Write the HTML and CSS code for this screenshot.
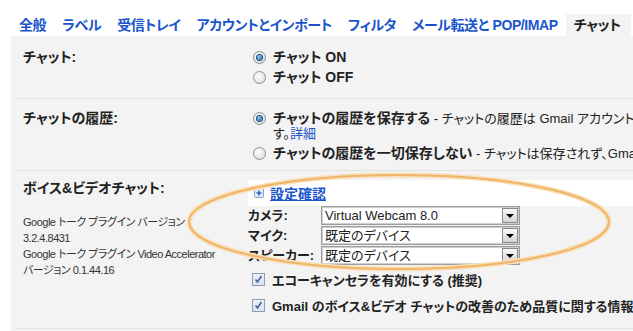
FILE: index.html
```html
<!DOCTYPE html>
<html>
<head>
  <meta charset="utf-8">
  <title>設定 - チャット</title>
  <link rel="stylesheet" href="styles.css">
</head>
<body>
  <div class="page">
    <div class="tabs">
      <a class="tab" href="#">全般</a>
      <a class="tab" href="#">ラベル</a>
      <a class="tab" href="#">受信トレイ</a>
      <a class="tab" href="#">アカウントとインポート</a>
      <a class="tab" href="#">フィルタ</a>
      <a class="tab" href="#">メール転送と POP/IMAP</a>
      <span class="tab active">チャット</span>
      <a class="tab" href="#">ウェブクリップ</a>
    </div>

    <div class="panel">
      <div class="row row-status">
        <div class="label">チャット:</div>
        <div class="field">
          <div class="option"><span class="radio on"></span><b>チャット ON</b></div>
          <div class="option"><span class="radio"></span><b>チャット OFF</b></div>
        </div>
      </div>

      <div class="row row-history">
        <div class="label">チャットの履歴:</div>
        <div class="field">
          <div class="option">
            <span class="radio on"></span>
            <span><b>チャットの履歴を保存する</b> - チャットの履歴は Gmail アカウントに保存されま<br>す。<a class="link" href="#">詳細</a></span>
          </div>
          <div class="option">
            <span class="radio"></span>
            <span><b>チャットの履歴を一切保存しない</b> - チャットは保存されず、Gmail のチャットの履歴にも表示されません。</span>
          </div>
        </div>
      </div>

      <div class="row row-voice">
        <div class="label">
          <div class="voice-title">ボイス&amp;ビデオチャット:</div>
          <p class="plugin">Google トーク プラグイン バージョン<br>3.2.4.8431</p>
          <p class="plugin">Google トーク プラグイン Video Accelerator<br>バージョン 0.1.44.16</p>
        </div>
        <div class="field">
          <div class="check-settings">
            <svg class="plus" width="10" height="10" viewBox="0 0 10 10">
              <rect x="0.5" y="0.5" width="9" height="9" rx="1" fill="#e4edf8" stroke="#7fa3d3"/>
              <path d="M5 2.5v5M2.5 5h5" stroke="#2f64b4" stroke-width="1.6"/>
            </svg>
            <a class="settings-link" href="#">設定確認</a>
          </div>

          <div class="devices">
            <div class="device-label">カメラ:</div>
            <div class="select"><span class="value">Virtual Webcam 8.0</span><span class="arrow"></span></div>
            <div class="device-label">マイク:</div>
            <div class="select"><span class="value">既定のデバイス</span><span class="arrow"></span></div>
            <div class="device-label">スピーカー:</div>
            <div class="select"><span class="value">既定のデバイス</span><span class="arrow"></span></div>
          </div>

          <div class="checks">
            <div class="check">
              <span class="checkbox"><svg width="9" height="9" viewBox="0 0 9 9"><path d="M1.5 4.5l2 2.5 4-6" fill="none" stroke="#3d5f9c" stroke-width="1.6"/></svg></span>
              エコーキャンセラを有効にする (推奨)
            </div>
            <div class="check">
              <span class="checkbox"><svg width="9" height="9" viewBox="0 0 9 9"><path d="M1.5 4.5l2 2.5 4-6" fill="none" stroke="#3d5f9c" stroke-width="1.6"/></svg></span>
              Gmail のボイス&amp;ビデオ チャットの改善のため品質に関する情報を Google に送信する
            </div>
          </div>
        </div>
      </div>
    </div>

    <!-- hand-drawn highlight around the device settings -->
    <svg class="annotation" width="633" height="331">
      <ellipse cx="399" cy="222" rx="210" ry="47" fill="none" stroke="#f9dfb9" stroke-width="5"/>
      <ellipse cx="399" cy="222" rx="210" ry="47" fill="none" stroke="#efb466" stroke-width="2"/>
    </svg>
  </div>
</body>
</html>
```

FILE: styles.css
```css
body {
  margin: 0;
  font-family: "Liberation Sans", "Noto Sans CJK JP", sans-serif;
  font-size: 13px;
  font-feature-settings: "palt";
  color: #222;
  background: #fff;
  overflow: hidden;
}

.page {
  width: 900px;
  height: 331px;
  position: relative;
}

.tabs {
  display: flex;
  padding: 14px 0 0 11px;
  height: 22px;
  white-space: nowrap;
}

.tab {
  padding: 0 8px;
  line-height: 22px;
  font-size: 14px;
  font-weight: bold;
  letter-spacing: -0.4px;
  color: #1a55cc;
  text-decoration: none;
}

.tab.active {
  background: #f3f3f3;
  color: #222;
  padding-right: 10px;
}

.panel {
  margin-left: 11px;
  height: 295px;
  background: #f3f3f3;
}

.row {
  display: flex;
  margin-left: 4px;
  border-bottom: 1px solid #e2e2e2;
}

.row-status {
  padding: 14px 0 13px;
}

.row-history {
  padding: 12px 0 9px;
}

.row-voice {
  padding: 9px 0 15px;
}

.label {
  flex-shrink: 0;
  width: 225px;
  padding-left: 8px;
  font-size: 14px;
  font-weight: bold;
  line-height: 15px;
}

.field {
  flex: 1;
}

.option {
  display: flex;
  align-items: flex-start;
  line-height: 15px;
  margin-bottom: 5px;
  white-space: nowrap;
}

.option:last-child {
  margin-bottom: 0;
}

.option b {
  font-size: 14px;
}

.radio {
  box-sizing: border-box;
  flex-shrink: 0;
  width: 13px;
  height: 13px;
  margin: 1px 7px 0 5px;
  border: 1px solid #8e8f8f;
  border-radius: 50%;
  background: radial-gradient(circle at 40% 35%, #fff, #d6d6d6);
  display: flex;
  align-items: center;
  justify-content: center;
}

.radio.on::after {
  content: "";
  width: 5px;
  height: 5px;
  border-radius: 50%;
  background: radial-gradient(circle at 40% 35%, #7cc8f2, #1b5fa8);
  box-shadow: 0 0 0 1px #2b4463;
}

.link {
  color: #1a55cc;
  text-decoration: none;
}

.voice-title {
  line-height: 16px;
}

.plugin {
  margin: 0;
  font-size: 11px;
  font-weight: normal;
  letter-spacing: -0.5px;
  line-height: 16px;
  color: #333;
}

.voice-title + .plugin {
  margin-top: 18px;
}

.check-settings {
  display: flex;
  align-items: center;
  height: 26px;
  padding-left: 6px;
  background: #fff;
}

.plus {
  margin-right: 6px;
}

.settings-link {
  font-size: 14px;
  font-weight: bold;
  color: #1a55cc;
  text-decoration: underline;
}

.devices {
  display: grid;
  grid-template-columns: 73px 199px;
  grid-auto-rows: 19px;
  row-gap: 1px;
}

.device-label {
  font-weight: bold;
  line-height: 19px;
  white-space: nowrap;
}

.select {
  box-sizing: border-box;
  display: flex;
  border: 1px solid #9c9c9c;
  box-shadow: inset 0 0 0 1px #cfcfcf;
  background: #fff;
}

.value {
  flex: 1;
  padding-left: 3px;
  line-height: 17px;
  font-size: 13px;
}

.arrow {
  box-sizing: border-box;
  width: 16px;
  margin: 1px;
  border: 1px solid #8a8a8a;
  background: linear-gradient(#fafafa, #d4d4d4);
  display: flex;
  align-items: center;
  justify-content: center;
}

.arrow::after {
  content: "";
  border-left: 4px solid transparent;
  border-right: 4px solid transparent;
  border-top: 4px solid #000;
}

.checks {
  margin-top: 6px;
}

.check {
  display: flex;
  align-items: center;
  height: 16px;
  margin-bottom: 10px;
  font-weight: bold;
  white-space: nowrap;
}

.check:last-child {
  margin-bottom: 0;
}

.checkbox {
  box-sizing: border-box;
  width: 13px;
  height: 13px;
  margin: 0 7px 0 4px;
  border: 1px solid #8e9db5;
  background: linear-gradient(#eef2f8, #dbe2ec);
  display: flex;
  align-items: center;
  justify-content: center;
}

.annotation {
  position: absolute;
  left: 0;
  top: 0;
  pointer-events: none;
}
```
